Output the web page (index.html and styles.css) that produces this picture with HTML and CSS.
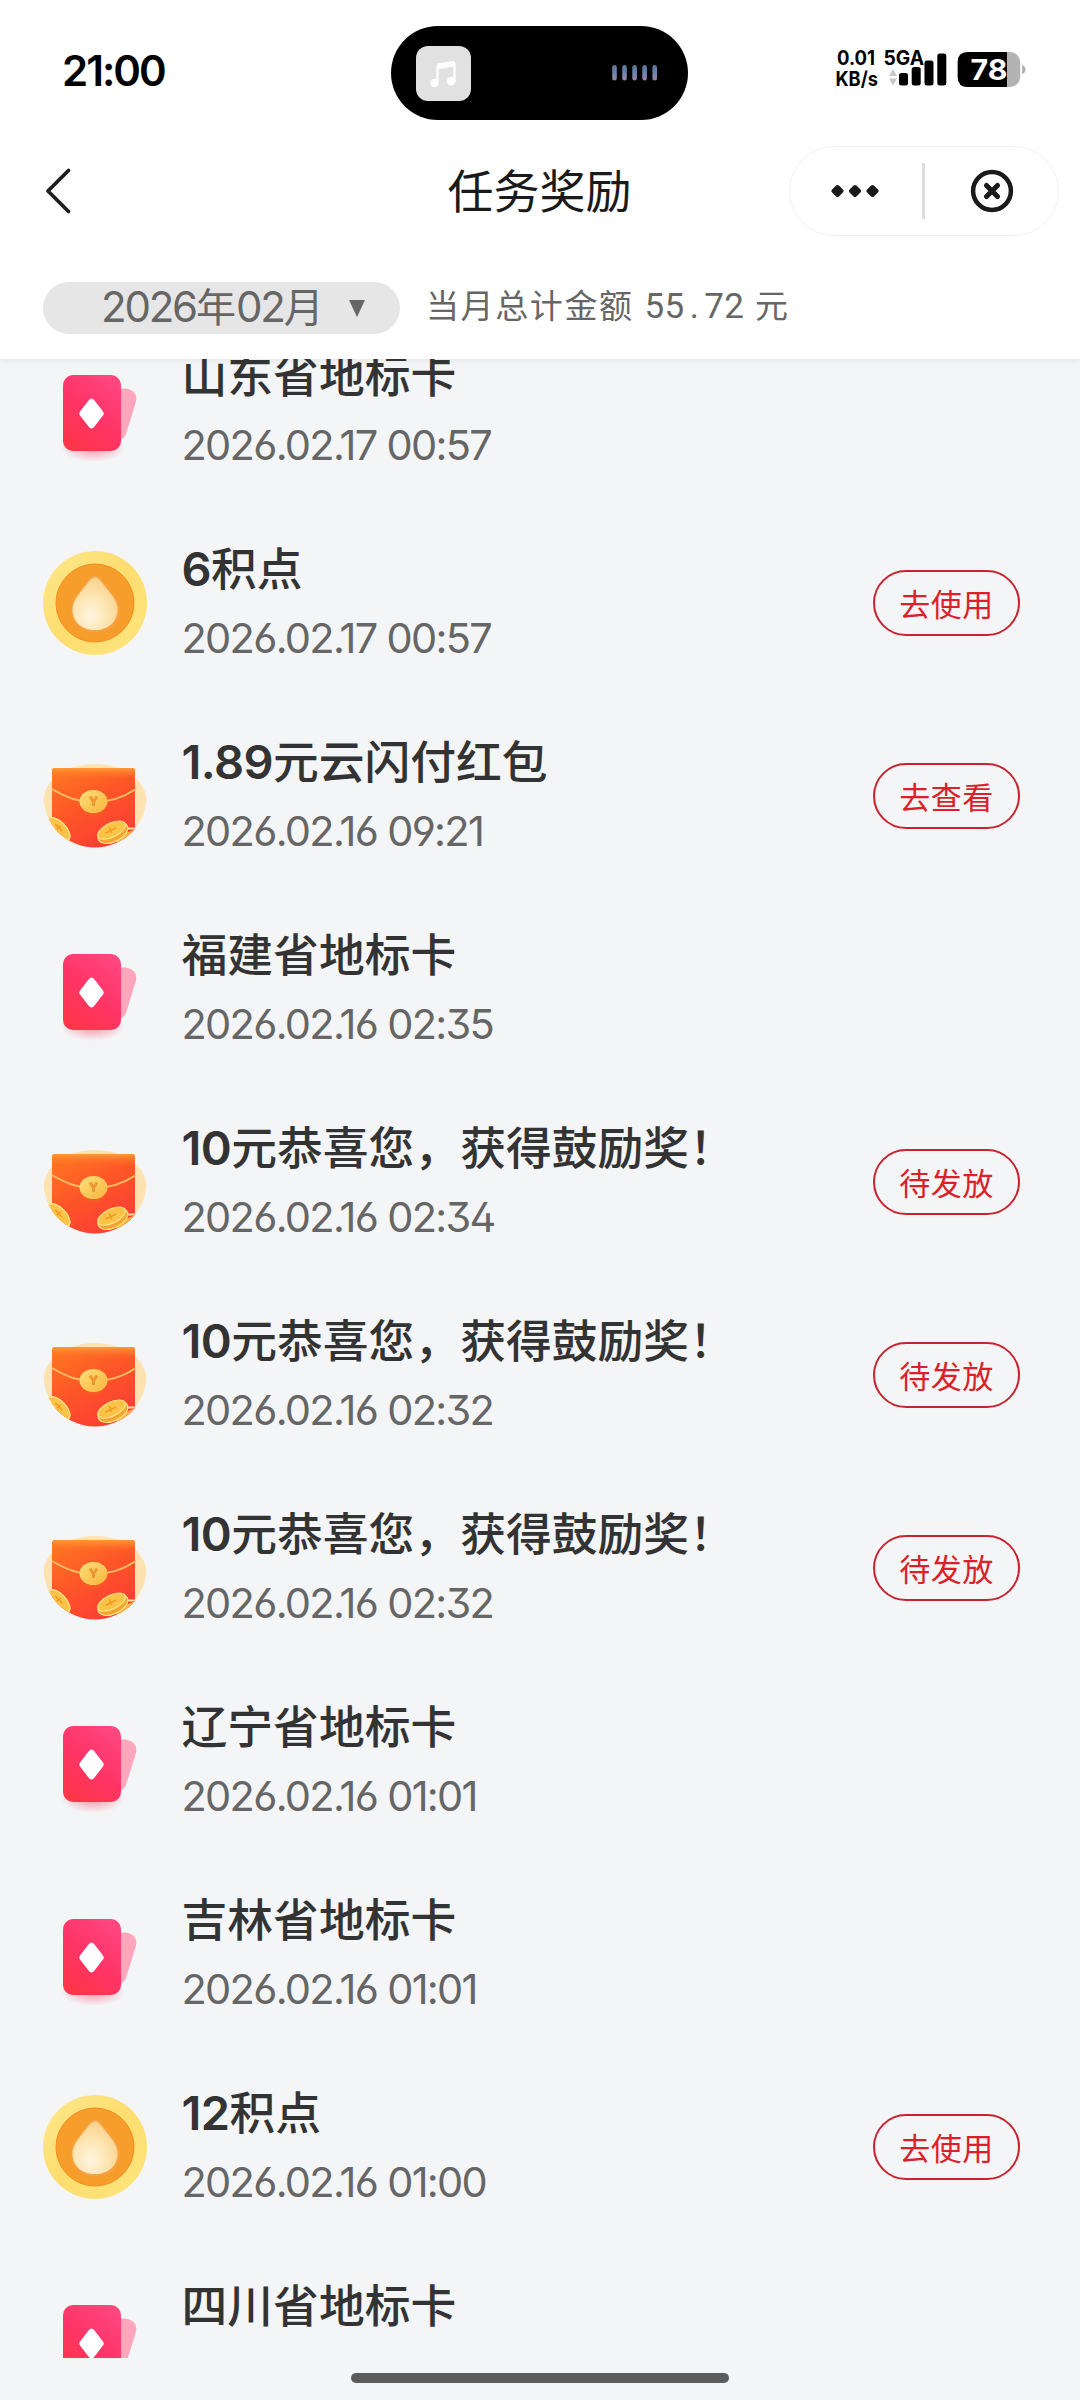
FILE: index.html
```html
<!DOCTYPE html>
<html lang="zh-CN">
<head>
<meta charset="utf-8">
<title>任务奖励</title>
<link rel="stylesheet" href="styles.css">
</head>
<body>
<svg class="defs" width="0" height="0" aria-hidden="true">
  <defs>
    <linearGradient id="cardFill" x1="0.8" y1="0" x2="0.2" y2="1">
      <stop offset="0" stop-color="#ff477f"/><stop offset="0.5" stop-color="#ff3467"/><stop offset="1" stop-color="#ff3548"/>
    </linearGradient>
    <radialGradient id="cardGlow">
      <stop offset="0" stop-color="#ff5570" stop-opacity="0.6"/><stop offset="1" stop-color="#ff5570" stop-opacity="0"/>
    </radialGradient>
    <linearGradient id="coinRim" x1="0" y1="0" x2="1" y2="1">
      <stop offset="0" stop-color="#fde98d"/><stop offset="0.5" stop-color="#fddd6f"/><stop offset="1" stop-color="#fee680"/>
    </linearGradient>
    <radialGradient id="drop" cx="0.4" cy="0.72" r="0.65">
      <stop offset="0" stop-color="#fff5e0"/><stop offset="0.55" stop-color="#fde6b4"/><stop offset="1" stop-color="#fcd593"/>
    </radialGradient>
    <linearGradient id="packet" x1="0" y1="0" x2="0.7" y2="1">
      <stop offset="0" stop-color="#ff7a20"/><stop offset="0.5" stop-color="#fe5528"/><stop offset="1" stop-color="#fb3a38"/>
    </linearGradient>
    <linearGradient id="gold" x1="0" y1="0" x2="1" y2="1">
      <stop offset="0" stop-color="#ffe07a"/><stop offset="1" stop-color="#f7b43c"/>
    </linearGradient>
    <linearGradient id="flap" x1="0" y1="0" x2="0" y2="1">
      <stop offset="0" stop-color="#ff9a35"/><stop offset="1" stop-color="#ff6a22" stop-opacity="0"/>
    </linearGradient>
    <linearGradient id="wave" x1="0" y1="0" x2="0" y2="1">
      <stop offset="0" stop-color="#52779d"/><stop offset="0.6" stop-color="#7584b0"/><stop offset="1" stop-color="#9b83a3"/>
    </linearGradient>
    <clipPath id="disc"><circle cx="52" cy="52" r="51.5"/></clipPath>

    <symbol id="card" viewBox="0 0 104 104">
      <ellipse cx="50" cy="90" rx="32" ry="14" fill="url(#cardGlow)"/>
      <path d="M76 30.500h7q12 2.500 10 13L83 76q-2 5-7 6z" fill="#ffa6bd"/>
      <rect x="20" y="17" width="58" height="76" rx="10" fill="url(#cardFill)"/>
      <path d="M45.500 42.500q3-4 6 0l8.500 11q1.500 2 0 4l-8.500 11q-3 4-6 0l-8.500-11q-1.500-2 0-4z" fill="#fff"/>
    </symbol>
    <symbol id="coin" viewBox="0 0 104 104">
      <circle cx="52" cy="52" r="52" fill="url(#coinRim)"/>
      <circle cx="52" cy="52" r="39" fill="#f79d2c" stroke="#f28c1e" stroke-width="1"/>
      <path d="M52 24.500c4 0 6 3 9 7 8 10 15.500 18 15.500 26.500C76.500 72 66 81 52 81S28.500 72 28.500 58C28.500 49.500 35 41.500 43 31.500c3-4 5-7 9-7z" fill="#f4a448"/>
      <path d="M52 26.500c3 0 5 2.500 8 6.500 8 10 14.500 17 14.500 25.500C74.500 71 65 79 52 79S29.500 71 29.500 58.500C29.500 50 36 43 44 33c3-4 5-6.500 8-6.500z" fill="url(#drop)"/>
    </symbol>
    <symbol id="envelope" viewBox="0 0 104 104">
      <g clip-path="url(#disc)">
        <path d="M0 104V60C0 36 22 20 52 20s52 16 52 40v44z" fill="#fee3b0"/>
        <path d="M9 27q0-3 3-3h77q3 0 3 3v57h12v20H9z" fill="url(#packet)"/>
        <path d="M9 27q0-3 3-3h77q3 0 3 3v9H9z" fill="url(#flap)"/>
        <path d="M9 45c17 10 28 13 42 13s27-3 42-13" fill="none" stroke="#ffbd62" stroke-width="2"/>
        <path d="M82 85h22v19H82z" fill="#fb3a38"/>
        <path d="M72 95q14-10 30-11v5q-10 13-27 10z" fill="#fcb63c"/>
        <path d="M84 84.500h14" stroke="#ffe49a" stroke-width="2"/>
        <circle cx="50.500" cy="59.500" r="13" fill="#ef6322" opacity="0.500"/>
        <ellipse cx="50.500" cy="57.500" rx="14" ry="11.500" fill="url(#gold)"/>
        <path d="M47 52.500l3.500 5.500 3.500-5.500M50.500 57v5" stroke="#ef9633" stroke-width="3" fill="none"/>
        <g transform="rotate(46 14 84)">
          <ellipse cx="16" cy="85" rx="15" ry="8.500" fill="#f8ab31" stroke="#ffe286" stroke-width="1.200"/>
          <ellipse cx="16" cy="83" rx="14" ry="6.500" fill="#fbc347" stroke="#ffe286" stroke-width="1.200"/>
          <path d="M10 82.500h10M15 80v5" stroke="#ef9e23" stroke-width="1.600"/>
        </g>
        <g transform="rotate(-26 69 87)">
          <ellipse cx="69" cy="89" rx="16" ry="9" fill="#f5a52f" stroke="#ffe286" stroke-width="1.200"/>
          <ellipse cx="69" cy="86" rx="15" ry="7" fill="#fbc347" stroke="#ffe286" stroke-width="1.200"/>
          <path d="M62 86h12M68 82.500v6" stroke="#ef9e23" stroke-width="1.600"/>
        </g>
      </g>
    </symbol>
  </defs>
</svg>

<div class="screen">
  <header class="header">
    <div class="status">
      <div class="clock">21:00</div>
      <div class="island">
        <svg class="music" width="55" height="55" viewBox="0 0 55 55">
          <rect width="55" height="55" rx="12" fill="#e1e1e1"/>
          <path d="M21.500 37V21l17-3.500V35" fill="none" stroke="#fff" stroke-width="2.200" stroke-linejoin="round"/>
          <path d="M21 19q0-1.500 2-2l14-2q2 0 2 1.500V20l-18 3.500z" fill="#fff"/>
          <circle cx="18.300" cy="37" r="4.300" fill="#fff"/><circle cx="35.200" cy="35.300" r="4.300" fill="#fff"/>
        </svg>
        <svg width="46" height="16" viewBox="0 0 46 16" fill="url(#wave)">
          <rect x="0.200" width="4.600" height="15.500" rx="2.300"/><rect x="10.200" width="4.600" height="15.500" rx="2.300"/><rect x="20.300" width="4.600" height="15.500" rx="2.300"/><rect x="30.300" width="4.600" height="15.500" rx="2.300"/><rect x="40.400" width="4.600" height="15.500" rx="2.300"/>
        </svg>
      </div>
      <svg class="indicators" width="200" height="44" viewBox="830 46 200 44">
        <g class="net">
          <text x="837" y="64.700" textLength="38" lengthAdjust="spacingAndGlyphs">0.01</text>
          <text x="835.500" y="86" textLength="42.500" lengthAdjust="spacingAndGlyphs">KB/s</text>
          <text x="883.500" y="64.700" textLength="40.500" lengthAdjust="spacingAndGlyphs">5GA</text>
        </g>
        <path d="M893 69l4 7h-8zM893 85.500l4-7h-8z" fill="#c8c8c8"/>
        <rect x="899" y="73" width="9" height="12.500" rx="2.500"/><rect x="911.700" y="67" width="9" height="18.500" rx="2.500"/><rect x="924.500" y="60.500" width="9" height="25" rx="2.500"/><rect x="937.300" y="53.500" width="9" height="32" rx="2.500"/>
        <rect x="957.700" y="52" width="62.500" height="35" rx="10" fill="#b3b3b3"/>
        <path d="M1007 52h-39.300q-10 0-10 10v15q0 10 10 10H1007z"/>
        <path d="M1022 65q3.500 1 3.500 4.500t-3.500 4.500z" fill="#b3b3b3"/>
        <text class="charge" x="970.500" y="80" textLength="37" lengthAdjust="spacingAndGlyphs">78</text>
      </svg>
    </div>
    <div class="nav">
      <svg class="back" width="30" height="50" viewBox="0 0 30 50"><path d="M25.500 4.500L5 25l20.500 20.500" fill="none" stroke="#1f1f1f" stroke-width="3.800" stroke-linecap="round" stroke-linejoin="round"/></svg>
      <h1 class="nav-title">任务奖励</h1>
      <div class="capsule">
        <svg width="48" height="14" viewBox="0 0 48 14" fill="#1a1a1a" stroke="#1a1a1a" stroke-width="4" stroke-linejoin="round"><path d="M6.500 3l4 4-4 4-4-4zM24 3l4 4-4 4-4-4zM41.500 3l4 4-4 4-4-4z"/></svg>
        <span class="divider"></span>
        <svg width="44" height="44" viewBox="0 0 44 44" fill="none" stroke="#1a1a1a"><circle cx="22" cy="22" r="18.900" stroke-width="4.500"/><path d="M16.500 16.500l11 11M27.500 16.500l-11 11" stroke-width="5.200" stroke-linecap="round"/></svg>
      </div>
    </div>
    <div class="filter">
      <div class="month">
        <span class="month-text"><span class="num">2026</span>年<span class="num">02</span>月</span>
        <svg width="16" height="17" viewBox="0 0 16 17"><path d="M0 0h16L8 17z" fill="#666"/></svg>
      </div>
      <div class="total"><span>当月总计金额</span><span class="sum">55<i>.</i>72</span><span>元</span></div>
    </div>
  </header>

  <main class="list">
    <section class="row"><svg class="icon"><use href="#card"/></svg><div class="info"><div class="name">山东省地标卡</div><div class="date">2026.02.17 00:57</div></div></section>
    <section class="row"><svg class="icon"><use href="#coin"/></svg><div class="info"><div class="name"><span class="num">6</span>积点</div><div class="date">2026.02.17 00:57</div></div><a class="btn">去使用</a></section>
    <section class="row"><svg class="icon"><use href="#envelope"/></svg><div class="info"><div class="name"><span class="num">1.89</span>元云闪付红包</div><div class="date">2026.02.16 09:21</div></div><a class="btn">去查看</a></section>
    <section class="row"><svg class="icon"><use href="#card"/></svg><div class="info"><div class="name">福建省地标卡</div><div class="date">2026.02.16 02:35</div></div></section>
    <section class="row"><svg class="icon"><use href="#envelope"/></svg><div class="info"><div class="name"><span class="num">10</span>元恭喜您，获得鼓励奖！</div><div class="date">2026.02.16 02:34</div></div><a class="btn">待发放</a></section>
    <section class="row"><svg class="icon"><use href="#envelope"/></svg><div class="info"><div class="name"><span class="num">10</span>元恭喜您，获得鼓励奖！</div><div class="date">2026.02.16 02:32</div></div><a class="btn">待发放</a></section>
    <section class="row"><svg class="icon"><use href="#envelope"/></svg><div class="info"><div class="name"><span class="num">10</span>元恭喜您，获得鼓励奖！</div><div class="date">2026.02.16 02:32</div></div><a class="btn">待发放</a></section>
    <section class="row"><svg class="icon"><use href="#card"/></svg><div class="info"><div class="name">辽宁省地标卡</div><div class="date">2026.02.16 01:01</div></div></section>
    <section class="row"><svg class="icon"><use href="#card"/></svg><div class="info"><div class="name">吉林省地标卡</div><div class="date">2026.02.16 01:01</div></div></section>
    <section class="row"><svg class="icon"><use href="#coin"/></svg><div class="info"><div class="name"><span class="num">12</span>积点</div><div class="date">2026.02.16 01:00</div></div><a class="btn">去使用</a></section>
    <section class="row"><svg class="icon"><use href="#card"/></svg><div class="info"><div class="name">四川省地标卡</div></div></section>
  </main>
  <footer class="home"><span class="home-bar"></span></footer>
</div>
</body>
</html>
```
FILE: styles.css
```css
* { box-sizing: border-box; }
body {
  margin: 0;
  background: #f4f5f7;
  font-family: "Noto Sans CJK SC", sans-serif;
  color: #333;
}
.defs { position: absolute; }
.screen {
  width: 1080px;
  height: 2400px;
  display: flex;
  flex-direction: column;
  overflow: hidden;
}
.header {
  height: 359px;
  flex: none;
  background: #fff;
  box-shadow: 0 2px 7px rgba(0, 0, 0, 0.06);
}
.status {
  height: 146px;
  display: flex;
  align-items: flex-start;
}
.clock {
  width: 391px;
  padding: 46px 0 0 62px;
  font: 600 42px/50px Inter, sans-serif;
  letter-spacing: -2px;
  color: #000;
}
.island {
  width: 297px;
  height: 94px;
  margin-top: 26px;
  padding: 0 30px 0 25px;
  border-radius: 47px;
  background: #000;
  display: flex;
  align-items: center;
  justify-content: space-between;
}
.indicators { margin: 46px 0 0 142px; }
.net { font: 700 20px Inter, sans-serif; }
.charge { font: 700 29px Inter, sans-serif; fill: #fff; }

.nav {
  height: 90px;
  padding: 0 21px 0 43px;
  display: grid;
  grid-template-columns: 270px 1fr 270px;
  align-items: center;
}
.nav-title {
  margin: 0;
  padding: 0 23px 7px 0;
  text-align: center;
  font-size: 46px;
  font-weight: 400;
  line-height: 60px;
  color: #1a1a1a;
}
.capsule {
  height: 90px;
  padding: 0 44px 0 41px;
  border: 1.500px solid #f1f1f1;
  border-radius: 45px;
  display: flex;
  align-items: center;
  justify-content: space-between;
}
.divider { width: 3px; height: 56px; margin-right: 2px; background: #dedede; }

.filter {
  height: 123px;
  padding: 46px 43px 0;
  display: flex;
  align-items: flex-start;
  color: #666;
}
.month {
  width: 357px;
  height: 52px;
  padding: 0 35px 0 58px;
  border-radius: 26px;
  background: #e6e6e6;
  display: flex;
  align-items: center;
  justify-content: space-between;
}
.month-text { padding-bottom: 5px; font-size: 40px; line-height: 47px; white-space: nowrap; }
.month-text .num { font: 400 42px/40px Inter, sans-serif; letter-spacing: -2.200px; }
.total {
  margin-left: 26px;
  display: flex;
  align-items: baseline;
  gap: 11px;
  font-size: 33px;
  line-height: 45px;
  letter-spacing: 1.600px;
}
.sum { font: 400 35px/40px Roboto, sans-serif; letter-spacing: 0.200px; }
.sum i { display: inline-block; width: 20px; text-align: center; font-style: normal; }

.list {
  height: 1999px;
  flex: none;
  overflow: hidden;
}
.row {
  height: 193px;
  padding: 0 60px 0 43px;
  display: flex;
  align-items: center;
}
.row:first-child { margin-top: -45.500px; }
.icon { width: 104px; height: 104px; flex: none; }
.info { height: 116px; margin-left: 34.500px; flex: 1; }
.name {
  height: 42px;
  font-size: 45.800px;
  font-weight: 500;
  line-height: 42px;
  white-space: nowrap;
}
.name .num { font: 600 47px/42px Inter, sans-serif; letter-spacing: -0.600px; }
.date {
  margin-top: 26px;
  font: 400 41.500px/50px Inter, sans-serif;
  letter-spacing: -1.700px;
  color: #666;
  font-feature-settings: "cv03", "cv04", "ss01";
}
.btn {
  width: 147px;
  height: 66px;
  border: 2px solid #c8232f;
  border-radius: 33px;
  text-align: center;
  font-size: 31px;
  line-height: 62px;
  letter-spacing: 0.500px;
  color: #dc1f28;
}
.home {
  height: 42px;
  padding-top: 15px;
  display: flex;
  justify-content: center;
}
.home-bar { width: 378px; height: 10px; border-radius: 5px; background: #5b5c5b; }
```
